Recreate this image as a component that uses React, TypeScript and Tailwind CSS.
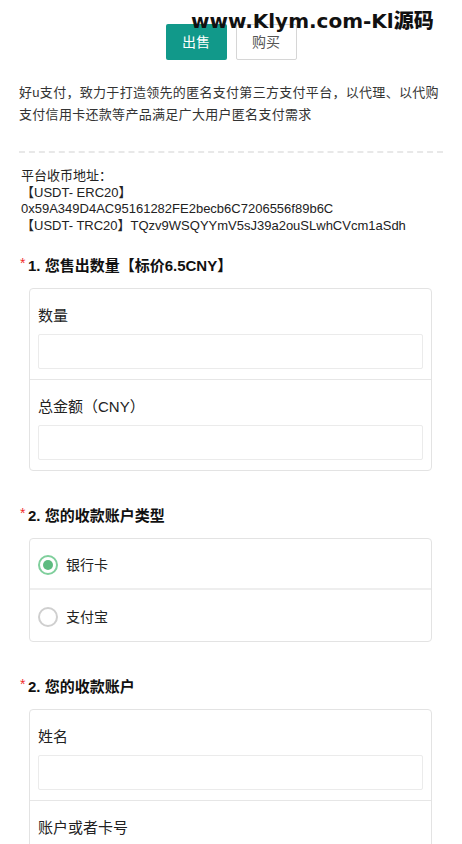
import React from 'react';

const font = { fontFamily: '"Liberation Sans", Arial, "Noto Sans CJK SC", sans-serif' };

const InputRow: React.FC<{ label: string; last?: boolean }> = ({ label, last }) => (
    <div className={`px-[8px] pt-[16px] pb-[10px] ${last ? '' : 'border-b border-[#e6e6e6]'}`}>
        <div className="text-[15px] leading-[22px] text-[#222] mb-[7px]">{label}</div>
        <div className="h-[35px] border border-[#ebebeb] rounded-[2px] bg-white" />
    </div>
);

const RadioRow: React.FC<{ label: string; checked?: boolean; last?: boolean }> = ({ label, checked, last }) => (
    <div className={`h-[51px] px-[8px] pt-[3px] flex items-center gap-[8px] ${last ? '' : 'border-b-2 border-[#eeeeee]'}`}>
        {checked ? (
            <span className="w-[20px] h-[20px] rounded-full border-2 border-[#7fcf9c] flex items-center justify-center">
                <span className="w-[10px] h-[10px] rounded-full bg-[#5dbb7f]" />
            </span>
        ) : (
            <span className="w-[20px] h-[20px] rounded-full border-2 border-[#cfcfcf]" />
        )}
        <span className="text-[14px] text-[#222]">{label}</span>
    </div>
);

const Title: React.FC<{ children: React.ReactNode }> = ({ children }) => (
    <div className="flex items-start h-[20px]">
        <span className="text-[#f02b2b] text-[14px] leading-[14px] w-[9px] pl-[1px]">*</span>
        <span className="text-[15px] leading-[20px] font-bold text-[#111]">{children}</span>
    </div>
);

export default function App() {
    return (
        <div className="w-[462px] min-h-[844px] bg-white relative overflow-hidden" style={font}>
            {/* watermark */}
            <div
                className="absolute left-[191px] top-[9px] text-[20px] font-black text-[#111] leading-[24px] z-10"
                style={{ fontFamily: '"DejaVu Sans", "Noto Sans CJK SC", sans-serif' }}
            >
                www.Klym.com-Kl源码
            </div>

            <div className="px-[19px]">
                <div className="flex justify-center gap-[9px] pt-[24px]">
                    <button className="w-[61px] h-[36px] rounded-[2px] bg-[#11998a] text-white text-[14px]">出售</button>
                    <button className="w-[61px] h-[36px] rounded-[2px] border border-[#d6d6d6] bg-white text-[#555] text-[14px]">购买</button>
                </div>

                <p className="mt-[22px] text-[13px] tracking-[0.3px] leading-[22px] text-[#333]">
                    好u支付，致力于打造领先的匿名支付第三方支付平台，以代理、以代购支付信用卡还款等产品满足广大用户匿名支付需求
                </p>

                <div className="mt-[25px] border-t-2 border-dashed border-[#e8e8e8]" />

                <div className="mt-[15px] pl-[2px] text-[13px] leading-[16.5px] text-[#222]">
                    <div>平台收币地址：</div>
                    <div>【USDT- ERC20】</div>
                    <div>0x59A349D4AC95161282FE2becb6C7206556f89b6C</div>
                    <div>【USDT- TRC20】TQzv9WSQYYmV5sJ39a2ouSLwhCVcm1aSdh</div>
                </div>

                <div className="mt-[22px]">
                    <Title>1. 您售出数量【标价6.5CNY】</Title>
                    <div className="ml-[10px] mr-[11px] mt-[12px] border border-[#e3e3e3] rounded-[4px]">
                        <InputRow label="数量" />
                        <InputRow label="总金额（CNY）" last />
                    </div>
                </div>

                <div className="mt-[35px]">
                    <Title>2. 您的收款账户类型</Title>
                    <div className="ml-[10px] mr-[11px] mt-[12px] border border-[#e3e3e3] rounded-[4px]">
                        <RadioRow label="银行卡" checked />
                        <RadioRow label="支付宝" last />
                    </div>
                </div>

                <div className="mt-[35px] pb-[40px]">
                    <Title>2. 您的收款账户</Title>
                    <div className="ml-[10px] mr-[11px] mt-[12px] border border-[#e3e3e3] rounded-[4px]">
                        <InputRow label="姓名" />
                        <InputRow label="账户或者卡号" last />
                    </div>
                </div>
            </div>
        </div>
    );
}
